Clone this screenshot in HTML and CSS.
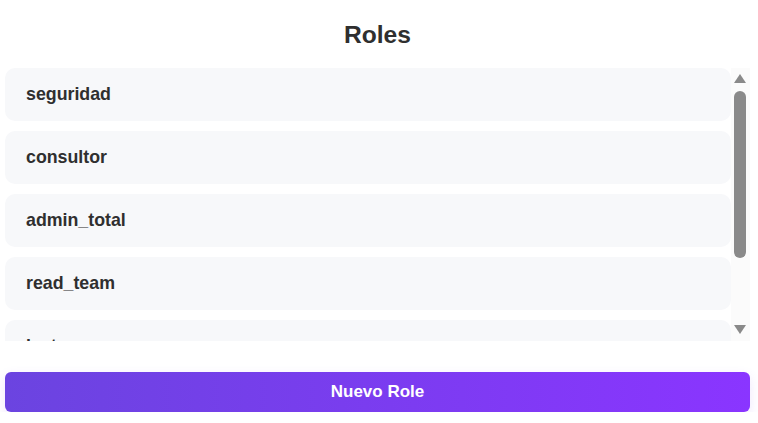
FILE: index.html
```html
<!DOCTYPE html>
<html lang="es">

<head>
  <meta charset="UTF-8" />
  <meta name="viewport" content="width=device-width, initial-scale=1.0" />
  <title>Roles</title>
  <link rel="stylesheet" href="styles.css">
</head>

<body>
  <div class="page">
    <h1>Roles</h1>

    <!-- LISTA -->
    <div class="list-wrap">
      <ul class="role-list">
        <li class="role-item">seguridad</li>
        <li class="role-item">consultor</li>
        <li class="role-item">admin_total</li>
        <li class="role-item">read_team</li>
        <li class="role-item">lector</li>
        <li class="role-item">auditor</li>
      </ul>
      <div class="scrollbar">
        <div class="arrow"><span class="tri-up"></span></div>
        <div class="thumb"></div>
        <div class="track-rest"></div>
        <div class="arrow"><span class="tri-down"></span></div>
      </div>
    </div>

    <button class="new-btn">Nuevo Role</button>
  </div>
</body>

</html>
```

FILE: styles.css
```css
body {
  font-family: "Liberation Sans", Arial, sans-serif;
  margin: 0;
  background-color: #fff;
  color: #2f2f2f;
}

.page {
  padding: 0 8px 0 5px;
}

h1 {
  text-align: center;
  font-size: 24.6px;
  margin: 0;
  padding: 21px 0 19px;
  line-height: 28px;
}

.list-wrap {
  display: flex;
  height: 273px;
}

.role-list {
  flex: 1;
  list-style: none;
  margin: 0;
  padding: 0;
  overflow: hidden;
}

.role-item {
  background-color: #f7f8fa;
  border-radius: 10px;
  height: 53px;
  line-height: 53px;
  padding-left: 21px;
  font-size: 17.8px;
  font-weight: bold;
  margin-bottom: 10px;
}

/* barra de scroll dibujada */
.scrollbar {
  width: 12px;
  padding: 0 4px 0 3px;
  display: flex;
  flex-direction: column;
  background-color: #fbfbfb;
}

.arrow {
  height: 20px;
  display: flex;
  align-items: center;
  justify-content: center;
}

.tri-up {
  border-left: 6px solid transparent;
  border-right: 6px solid transparent;
  border-bottom: 9px solid #8a8a8a;
}

.tri-down {
  margin-top: -4px;
  border-left: 6px solid transparent;
  border-right: 6px solid transparent;
  border-top: 9px solid #8a8a8a;
}

.thumb {
  margin-top: 3px;
  height: 167px;
  border-radius: 6px;
  background-color: #8a8a8a;
}

.track-rest {
  flex: 1;
}

.new-btn {
  display: block;
  width: 100%;
  height: 40px;
  margin-top: 31px;
  font-family: inherit;
  font-size: 17px;
  font-weight: bold;
  color: #fff;
  border: none;
  border-radius: 6px;
  background: linear-gradient(90deg, #6b44e0, #8a35ff);
  box-shadow: 0 4px 12px rgba(124, 58, 237, 0.12);
  cursor: pointer;
}
```
